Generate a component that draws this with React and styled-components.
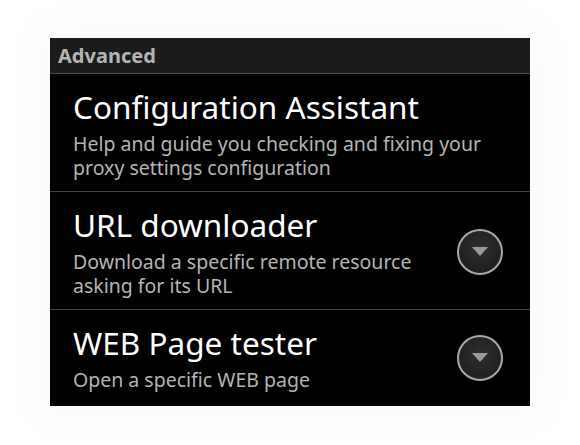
import React from 'react';
import styled, { createGlobalStyle } from 'styled-components'

const Global = createGlobalStyle`
  html, body {
    margin: 0;
    background: #ffffff;
  }
  body {
    font-family: "Noto Sans", "Open Sans", sans-serif;
  }
`

const Pagina = styled.main`
  width: 580px;
  height: 445px;
  padding: 38px 50px 0;
  box-sizing: border-box;
`

const Tela = styled.section`
  height: 368px;
  background: #000;
  display: flex;
  flex-direction: column;
  overflow: hidden;
  box-shadow: 0 0 44px 18px rgba(0, 0, 0, 0.018);
`

const Cabecalho = styled.header`
  height: 35px;
  flex-shrink: 0;
  display: flex;
  align-items: center;
  padding-left: 8px;
  background: #1b1b1b;
  border-bottom: 1px solid #4a4a4a;
  color: #b4b4b4;
  font-weight: bold;
  font-size: 20px;
`

const Linha = styled.div`
  display: flex;
  align-items: center;
  padding: 15px 27px ${({ ultima }) => (ultima ? '0' : '11px')} 23px;
  border-bottom: ${({ ultima }) => (ultima ? 'none' : '1px solid #444')};
`

const Textos = styled.div`
  flex: 1;
`

const Titulo = styled.div`
  color: #fff;
  font-size: 31.5px;
  line-height: 36px;
  margin-bottom: 7px;
`

const Resumo = styled.div`
  color: #b4b4b4;
  font-size: 19.5px;
  line-height: 24px;
`

const Botao = styled.button`
  width: 46px;
  height: 46px;
  border-radius: 50%;
  border: 2px solid #a8a8a8;
  background: radial-gradient(circle at 50% 40%, #2e2e2e, #1a1a1a);
  display: flex;
  align-items: center;
  justify-content: center;
  padding: 0;
  margin-top: -2px;
  flex-shrink: 0;
`

function Seta() {
  return (
    <svg width="16" height="9" viewBox="0 0 16 9">
      <polygon points="0,0 16,0 8,9" fill="#9a9a9a" />
    </svg>
  )
}

export default function App() {
  const itens = [
    {
      titulo: 'Configuration Assistant',
      resumo: 'Help and guide you checking and fixing your proxy settings configuration',
      botao: false
    },
    {
      titulo: 'URL downloader',
      resumo: 'Download a specific remote resource asking for its URL',
      botao: true
    },
    {
      titulo: 'WEB Page tester',
      resumo: 'Open a specific WEB page',
      botao: true
    }
  ]

  return (
    <Pagina>
      <Global />
      <Tela>
        <Cabecalho>Advanced</Cabecalho>
        {itens.map((item, i) => (
          <Linha key={item.titulo} ultima={i === itens.length - 1}>
            <Textos>
              <Titulo>{item.titulo}</Titulo>
              <Resumo style={{ maxWidth: item.botao ? '350px' : 'none' }}>{item.resumo}</Resumo>
            </Textos>
            {item.botao && <Botao><Seta /></Botao>}
          </Linha>
        ))}
      </Tela>
    </Pagina>
  )
}
